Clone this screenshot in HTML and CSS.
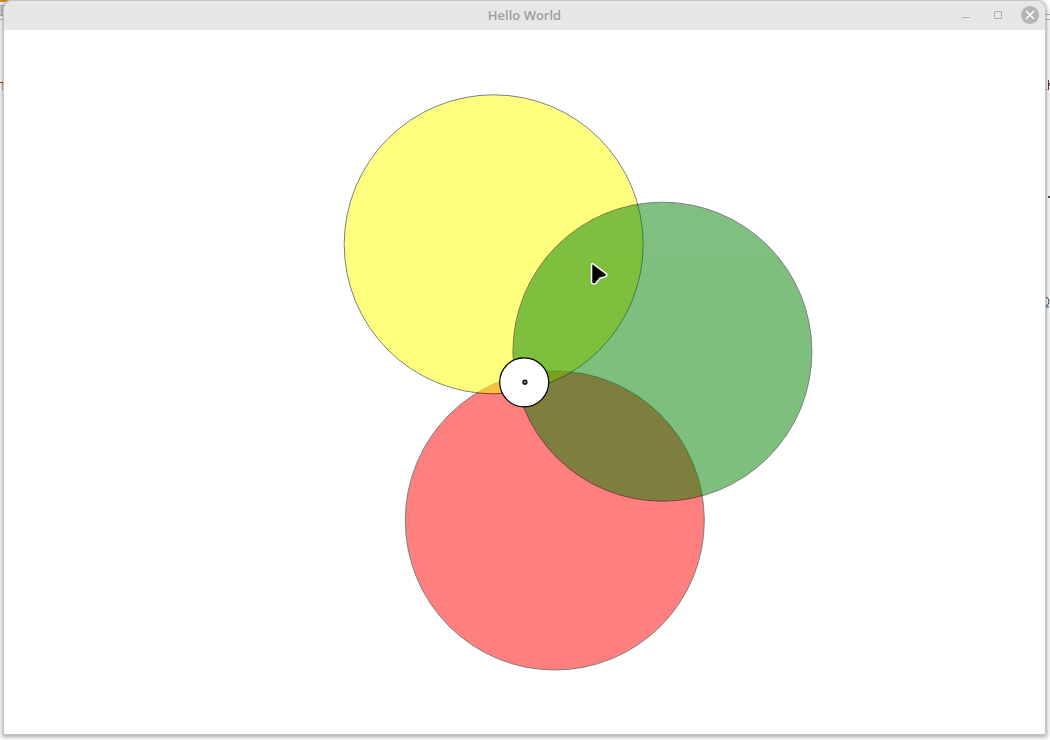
FILE: index.html
```
<!DOCTYPE html>
<html lang="en">
<head>
<meta charset="utf-8">
<title>Hello World</title>
<link rel="stylesheet" href="styles.css">
</head>
<body>
<div class="behind behind-left" aria-hidden="true">
  <svg class="strip" width="40" height="100" viewBox="0 0 40 100">
    <rect width="40" height="5" fill="#eeeeee"/>
    <path d="M0 0h9L5 2H0z" fill="#c98a25"/>
    <path d="M0 5.500h20M0 15.500h20M0 19.500h20" stroke="#b5b5b5"/>
    <rect y="6" width="20" height="9" fill="#cfcfcf"/>
    <path d="M0 82.500h3" stroke="#6b4a3a"/>
    <path d="M2.500 83v7" stroke="#e9a860"/>
  </svg>
</div>
<div class="behind behind-right" aria-hidden="true">
  <svg class="strip" width="10" height="320" viewBox="0 0 10 320">
    <path d="M0 14.500h10M0 19.500h10" stroke="#b5b5b5"/>
    <path d="M6 89.500h1" stroke="#4b86c5"/>
    <path d="M8.500 80v10" stroke="#7a3325"/>
    <path d="M9.500 83v3" stroke="#4b86c5"/>
    <path d="M8 197h2" stroke="#555555" stroke-width="2"/>
    <path d="M6 297q3 1 3 4.500t-3 4.500M6 307h3" fill="none" stroke="#2d4f71"/>
  </svg>
</div>
<main class="window">
  <header class="titlebar">
    <h1 class="title">Hello World</h1>
    <div class="controls">
      <button class="control" aria-label="Minimize"><svg width="18" height="18" viewBox="0 0 18 18"><path d="M5 11.500h8" stroke="#b0b0b0"/></svg></button>
      <button class="control" aria-label="Maximize"><svg width="18" height="18" viewBox="0 0 18 18"><path d="M5.500 5.500h7v7h-7z" fill="none" stroke="#b0b0b0"/></svg></button>
      <button class="control" aria-label="Close"><svg width="18" height="18" viewBox="0 0 18 18"><circle cx="9" cy="9" r="9" fill="#b5b5b5"/><path d="M5 5l8 8m0-8l-8 8" stroke="#fff" stroke-width="1.500"/></svg></button>
    </div>
  </header>
  <section class="scene">
    <svg class="canvas" viewBox="4 30 1041 704" role="img" aria-label="Three overlapping circles around a hub">
      <g stroke="#000" stroke-width="1">
        <circle cx="554.800" cy="520.500" r="149.500" fill="#f00" opacity=".5"/>
        <circle cx="493.700" cy="244.300" r="149.500" fill="#ff0" opacity=".5"/>
        <circle cx="662.400" cy="351.700" r="149.500" fill="#008000" opacity=".5"/>
        <circle cx="524.200" cy="382.300" r="24.500" fill="#fff" stroke-width="1.200"/>
        <circle cx="524.900" cy="382.200" r="2" fill="#808080" stroke-width="1.200"/>
      </g>
      <path d="M592.300 264.300L605.800 274.200Q606.500 275.700 604.500 276.300L599.500 277.500L595.200 283Q593.500 283.800 592.300 282.500Z" fill="#000" stroke="#fff" stroke-width="3" stroke-linejoin="round" paint-order="stroke"/>
    </svg>
  </section>
</main>
</body>
</html>
```
FILE: styles.css
```
* { box-sizing: border-box; }

body {
  margin: 0;
  min-height: 100vh;
  display: flex;
  padding: 0 4px 5px 3px;
  background: #fff;
  font-family: "Open Sans", "Noto Sans", sans-serif;
}

.behind {
  position: absolute;
  top: 0;
}

.behind-left { left: 0; }
.behind-right { right: 0; }

.strip { display: block; }

.window {
  position: relative;
  flex: 1;
  display: flex;
  flex-direction: column;
  border: 1px solid #c4c4c4;
  border-radius: 10px 10px 0 0;
  background: #fff;
  box-shadow: 0 1px 4px 1px rgba(0, 0, 0, .35);
  overflow: hidden;
}

.titlebar {
  display: grid;
  grid-template-columns: 1fr auto 1fr;
  align-items: center;
  height: 29px;
  padding: 0 6px 1px;
  background: #e7e7e7;
}

.title {
  grid-column: 2;
  margin: 0;
  font-size: 13px;
  line-height: 18px;
  font-weight: 600;
  color: #9e9e9e;
}

.controls {
  display: flex;
  justify-content: flex-end;
  gap: 14px;
}

.control {
  display: block;
  width: 18px;
  height: 18px;
  padding: 0;
  border: 0;
  background: none;
}

.control svg { display: block; }

.scene {
  flex: 1;
  display: flex;
  min-height: 0;
}

.canvas {
  display: block;
  width: 100%;
  height: 100%;
}
```
